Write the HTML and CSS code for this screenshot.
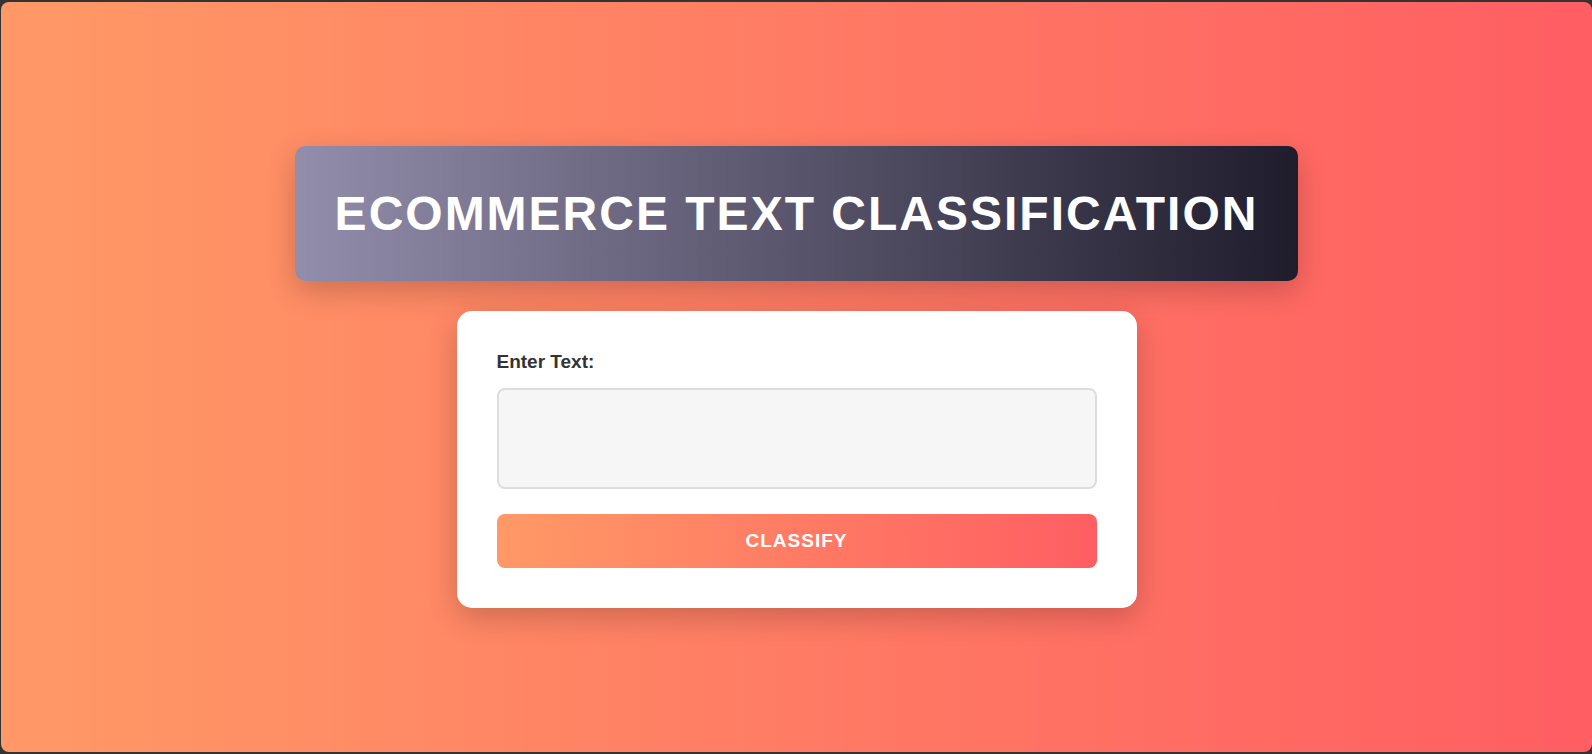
FILE: index.html
```html
<!DOCTYPE html>
<html lang="en">
<head>
<meta charset="utf-8">
<title>Ecommerce Text Classification</title>
<link rel="stylesheet" href="styles.css">
</head>
<body>
<div class="page">
  <h1 class="title">ECOMMERCE TEXT CLASSIFICATION</h1>
  <form class="card">
    <label class="label" for="text">Enter Text:</label>
    <textarea class="input" id="text"></textarea>
    <button class="btn" type="button">CLASSIFY</button>
  </form>
</div>
</body>
</html>
```
FILE: styles.css
```css
html, body {
  margin: 0;
  padding: 0;
  height: 100%;
}
body {
  background: #333333;
  font-family: "Liberation Sans", Arial, sans-serif;
  padding: 2px 0 2px 1px;
  box-sizing: border-box;
}
.page {
  height: 100%;
  border-radius: 8px;
  background: linear-gradient(to right, #ff9966, #ff5e62);
  display: flex;
  flex-direction: column;
  align-items: center;
  justify-content: center;
  gap: 30px;
}
.title {
  margin: 0;
  padding: 40px;
  font-size: 48px;
  font-weight: bold;
  line-height: normal;
  letter-spacing: 2px;
  color: #ffffff;
  border-radius: 10px;
  background: linear-gradient(to right, #928dab, #1f1c2c);
  box-shadow: 0 10px 30px rgba(0, 0, 0, 0.2);
}
.card {
  width: 600px;
  padding: 40px;
  background: #ffffff;
  border-radius: 15px;
  box-shadow: 0 10px 30px rgba(0, 0, 0, 0.2);
  display: flex;
  flex-direction: column;
}
.label {
  font-size: 19px;
  font-weight: bold;
  color: #333333;
  line-height: 21px;
  margin-bottom: 16px;
}
.input {
  display: block;
  box-sizing: border-box;
  width: 100%;
  height: 101px;
  margin: 0 0 25px 0;
  border: 2px solid #dddddd;
  border-radius: 8px;
  background: #f6f6f6;
  resize: none;
  font-family: inherit;
}
.btn {
  display: block;
  width: 100%;
  height: 54px;
  border: none;
  border-radius: 8px;
  background: linear-gradient(to right, #ff9966, #ff5e62);
  color: #ffffff;
  font-family: inherit;
  font-size: 19px;
  font-weight: bold;
  letter-spacing: 1px;
}
```
